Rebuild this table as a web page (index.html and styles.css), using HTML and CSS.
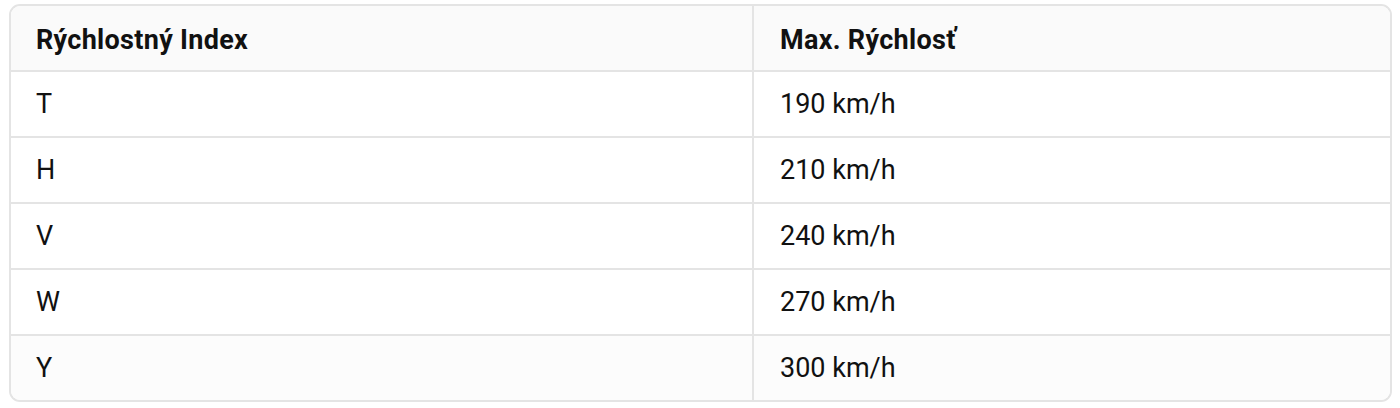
FILE: index.html
```html
<!DOCTYPE html>
<html lang="sk">
<head>
<meta charset="utf-8">
<title>Rýchlostný index</title>
<link rel="stylesheet" href="styles.css">
</head>
<body>
<div class="wrap">
  <table class="speed-table">
    <thead>
      <tr><th class="col-index">Rýchlostný Index</th><th class="col-speed">Max. Rýchlosť</th></tr>
    </thead>
    <tbody>
      <tr><td>T</td><td>190 km/h</td></tr>
      <tr><td>H</td><td>210 km/h</td></tr>
      <tr><td>V</td><td>240 km/h</td></tr>
      <tr><td>W</td><td>270 km/h</td></tr>
      <tr class="last"><td>Y</td><td>300 km/h</td></tr>
    </tbody>
  </table>
</div>
</body>
</html>
```

FILE: styles.css
```css
html, body {
  margin: 0;
  padding: 0;
  background: #ffffff;
}
body {
  font-family: Roboto, "Liberation Sans", sans-serif;
  color: #111111;
}
.wrap {
  padding: 4px 8px 0 9px;
}
.speed-table {
  width: 100%;
  border-collapse: separate;
  border-spacing: 0;
  border: 2px solid #e4e4e4;
  border-radius: 11px;
  overflow: hidden;
  table-layout: fixed;
}
.col-index { width: 743px; }
.speed-table th,
.speed-table td {
  height: 66px;
  padding: 0 26px 0 25px;
  text-align: left;
  vertical-align: middle;
  font-size: 27px;
  line-height: 30px;
  box-sizing: border-box;
}
.speed-table th {
  height: 66px;
  font-weight: 700;
  letter-spacing: 0.3px;
  background: #fafafa;
  padding-top: 4px;
  border-bottom: 2px solid #e4e4e4;
}
.speed-table td {
  font-weight: 400;
  border-bottom: 2px solid #e4e4e4;
}
.speed-table th:first-child,
.speed-table td:first-child {
  border-right: 2px solid #e4e4e4;
}
.speed-table th:last-child,
.speed-table td:last-child {
  padding-left: 26px;
}
.speed-table tr.last td {
  height: 64px;
  border-bottom: none;
  background: #fcfcfc;
}
```
